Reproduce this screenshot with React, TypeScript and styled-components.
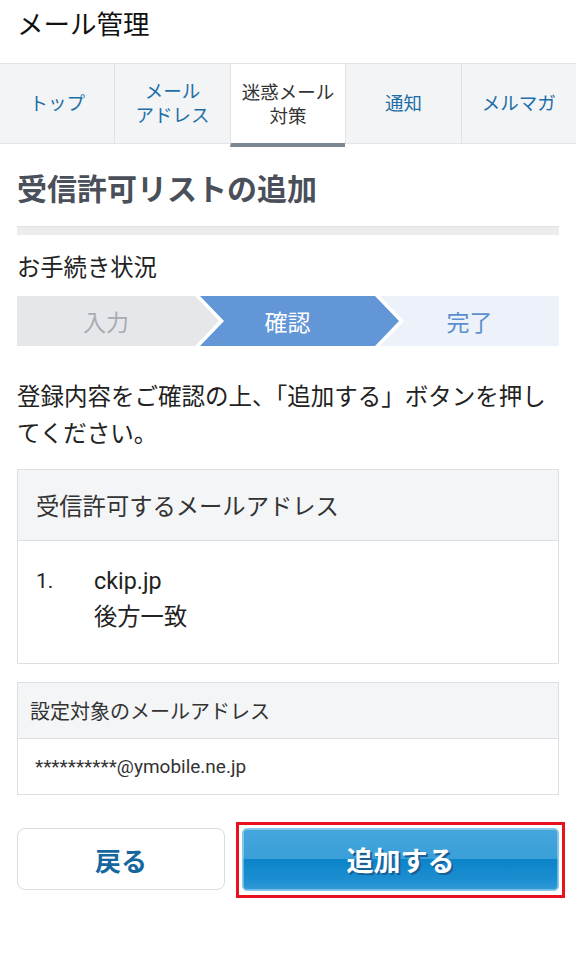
import React from 'react';
import styled, { createGlobalStyle } from 'styled-components';

const GlobalStyle = createGlobalStyle`
  body {
    margin: 0;
    background: #fff;
    font-family: Roboto, "Noto Sans CJK JP", sans-serif;
    color: #222;
  }
`;

const Page = styled.div`
  width: 576px;
`;

const Title = styled.h1`
  margin: 0;
  padding: 8px 17px 0;
  height: 55px;
  font-size: 26.5px;
  line-height: 34px;
  font-weight: 400;
  color: #111;
`;

const Tabs = styled.nav`
  display: flex;
  height: 84px;
  border-top: 1px solid #e0e2e5;
  box-sizing: border-box;
`;

const Tab = styled.div<{ $active?: boolean }>`
  flex: 1;
  display: flex;
  align-items: center;
  justify-content: center;
  text-align: center;
  font-size: 18.5px;
  line-height: 24px;
  box-sizing: border-box;
  border-left: 1px solid #e0e2e5;
  &:first-child {
    border-left: none;
  }
  background: ${(p) => (p.$active ? '#fff' : '#f3f4f6')};
  color: ${(p) => (p.$active ? '#333' : '#1b6ea8')};
  margin-bottom: ${(p) => (p.$active ? '0' : '3px')};
  border-bottom: ${(p) => (p.$active ? '4px solid #7d8792' : '1px solid #e3e5e8')};
  padding-top: ${(p) => (p.$active ? '2px' : '0')};
`;

const Content = styled.main`
  padding: 0 17px;
`;

const Heading = styled.h2`
  margin: 23px 0 0;
  font-size: 30px;
  line-height: 40px;
  font-weight: 700;
  color: #4a5059;
`;

const Rule = styled.div`
  margin-top: 16px;
  height: 9px;
  background: #ececec;
  border-top: 1px solid #e2e2e2;
  box-sizing: border-box;
`;

const Label = styled.div`
  margin-top: 17px;
  font-size: 23.3px;
  line-height: 32px;
  color: #222;
`;

const Steps = styled.ol`
  display: flex;
  margin: 12px 0 0;
  padding: 0;
  list-style: none;
  height: 50px;
`;

type StepState = 'done' | 'current' | 'todo';

const stepBg: Record<StepState, string> = {
  done: '#e6e7ea',
  current: '#6396d6',
  todo: '#edf2fa',
};
const stepFg: Record<StepState, string> = {
  done: '#a8acb2',
  current: '#fff',
  todo: '#5b8fcf',
};

const Step = styled.li<{ $state: StepState; $w: number; $first?: boolean; $last?: boolean }>`
  width: ${(p) => p.$w}px;
  flex: ${(p) => (p.$last ? '1' : 'none')};
  margin-left: ${(p) => (p.$first ? '0' : '-19px')};
  display: flex;
  align-items: center;
  justify-content: center;
  padding-right: ${(p) => (p.$last ? '0' : '24px')};
  box-sizing: border-box;
  font-size: 23px;
  background: ${(p) => stepBg[p.$state]};
  color: ${(p) => stepFg[p.$state]};
  clip-path: ${(p) =>
    p.$first
      ? 'polygon(0 0, calc(100% - 24px) 0, 100% 50%, calc(100% - 24px) 100%, 0 100%)'
      : p.$last
      ? 'polygon(0 0, 100% 0, 100% 100%, 0 100%, 24px 50%)'
      : 'polygon(0 0, calc(100% - 24px) 0, 100% 50%, calc(100% - 24px) 100%, 0 100%, 24px 50%)'};
`;

const Lead = styled.p`
  margin: 33px 0 0;
  font-size: 23.5px;
  line-height: 37px;
  color: #222;
`;

const Card = styled.section<{ $gap: number }>`
  margin-top: ${(p) => p.$gap}px;
  border: 1px solid #dcdfe3;
`;

const CardHead = styled.div<{ $h: number; $size: number; $pad: number }>`
  height: ${(p) => p.$h}px;
  display: flex;
  align-items: center;
  padding-left: ${(p) => p.$pad}px;
  background: #f4f5f7;
  border-bottom: 1px solid #dcdfe3;
  font-size: ${(p) => p.$size}px;
  color: #333;
`;

const ListBody = styled.div`
  display: flex;
  padding: 22px 18px 28px;
  font-size: 23.3px;
  line-height: 36px;
  color: #222;
`;

const Num = styled.span`
  width: 58px;
  font-size: 21px;
`;

const AddressBody = styled.div`
  height: 55px;
  display: flex;
  align-items: center;
  padding-left: 17px;
  font-size: 19px;
  color: #333;
`;

const Buttons = styled.div`
  display: grid;
  grid-template-columns: 208px 1fr;
  gap: 17px;
  margin-top: 33px;
  padding-bottom: 40px;
`;

const BackButton = styled.button`
  height: 62px;
  border: 1.5px solid #dcdcdc;
  border-radius: 8px;
  background: #fff;
  font-family: inherit;
  font-size: 26px;
  font-weight: 700;
  color: #17679f;
  cursor: pointer;
`;

const AddButton = styled.button`
  position: relative;
  height: 63px;
  border: 1px solid #86c8ee;
  border-radius: 5px;
  background: linear-gradient(
    to bottom,
    #45a6dc 0%,
    #3a9fd8 49%,
    #0c84c9 50%,
    #1a8dd0 80%,
    #2f9ad6 100%
  );
  box-shadow: inset 0 0 0 1px rgba(255, 255, 255, 0.35);
  font-family: inherit;
  font-size: 27px;
  font-weight: 700;
  color: #fff;
  text-shadow: 2px 2px 0 #1a5f95;
  cursor: pointer;

  /* red highlight frame drawn over the screenshot */
  &::after {
    content: '';
    position: absolute;
    inset: -7px -7px -8px -7px;
    border: 3px solid #e8121f;
    pointer-events: none;
  }
`;

const tabs = [
  { label: 'トップ' },
  { label: 'メール\nアドレス' },
  { label: '迷惑メール\n対策', active: true },
  { label: '通知' },
  { label: 'メルマガ' },
];

export default function App() {
  return (
    <Page>
      <GlobalStyle />
      <Title>メール管理</Title>
      <Tabs>
        {tabs.map((t) => (
          <Tab key={t.label} $active={t.active}>
            <span>
              {t.label.split('\n').map((line, i) => (
                <React.Fragment key={i}>
                  {i > 0 && <br />}
                  {line}
                </React.Fragment>
              ))}
            </span>
          </Tab>
        ))}
      </Tabs>
      <Content>
        <Heading>受信許可リストの追加</Heading>
        <Rule />
        <Label>お手続き状況</Label>
        <Steps>
          <Step $state="done" $w={202} $first>入力</Step>
          <Step $state="current" $w={199}>確認</Step>
          <Step $state="todo" $w={179} $last>完了</Step>
        </Steps>
        <Lead>登録内容をご確認の上、「追加する」ボタンを押してください。</Lead>
        <Card $gap={16}>
          <CardHead $h={70} $size={23.3} $pad={18}>受信許可するメールアドレス</CardHead>
          <ListBody>
            <Num>1.</Num>
            <div>
              ckip.jp
              <br />
              後方一致
            </div>
          </ListBody>
        </Card>
        <Card $gap={18}>
          <CardHead $h={55} $size={20} $pad={12}>設定対象のメールアドレス</CardHead>
          <AddressBody>**********@ymobile.ne.jp</AddressBody>
        </Card>
        <Buttons>
          <BackButton>戻る</BackButton>
          <AddButton>追加する</AddButton>
        </Buttons>
      </Content>
    </Page>
  );
}
